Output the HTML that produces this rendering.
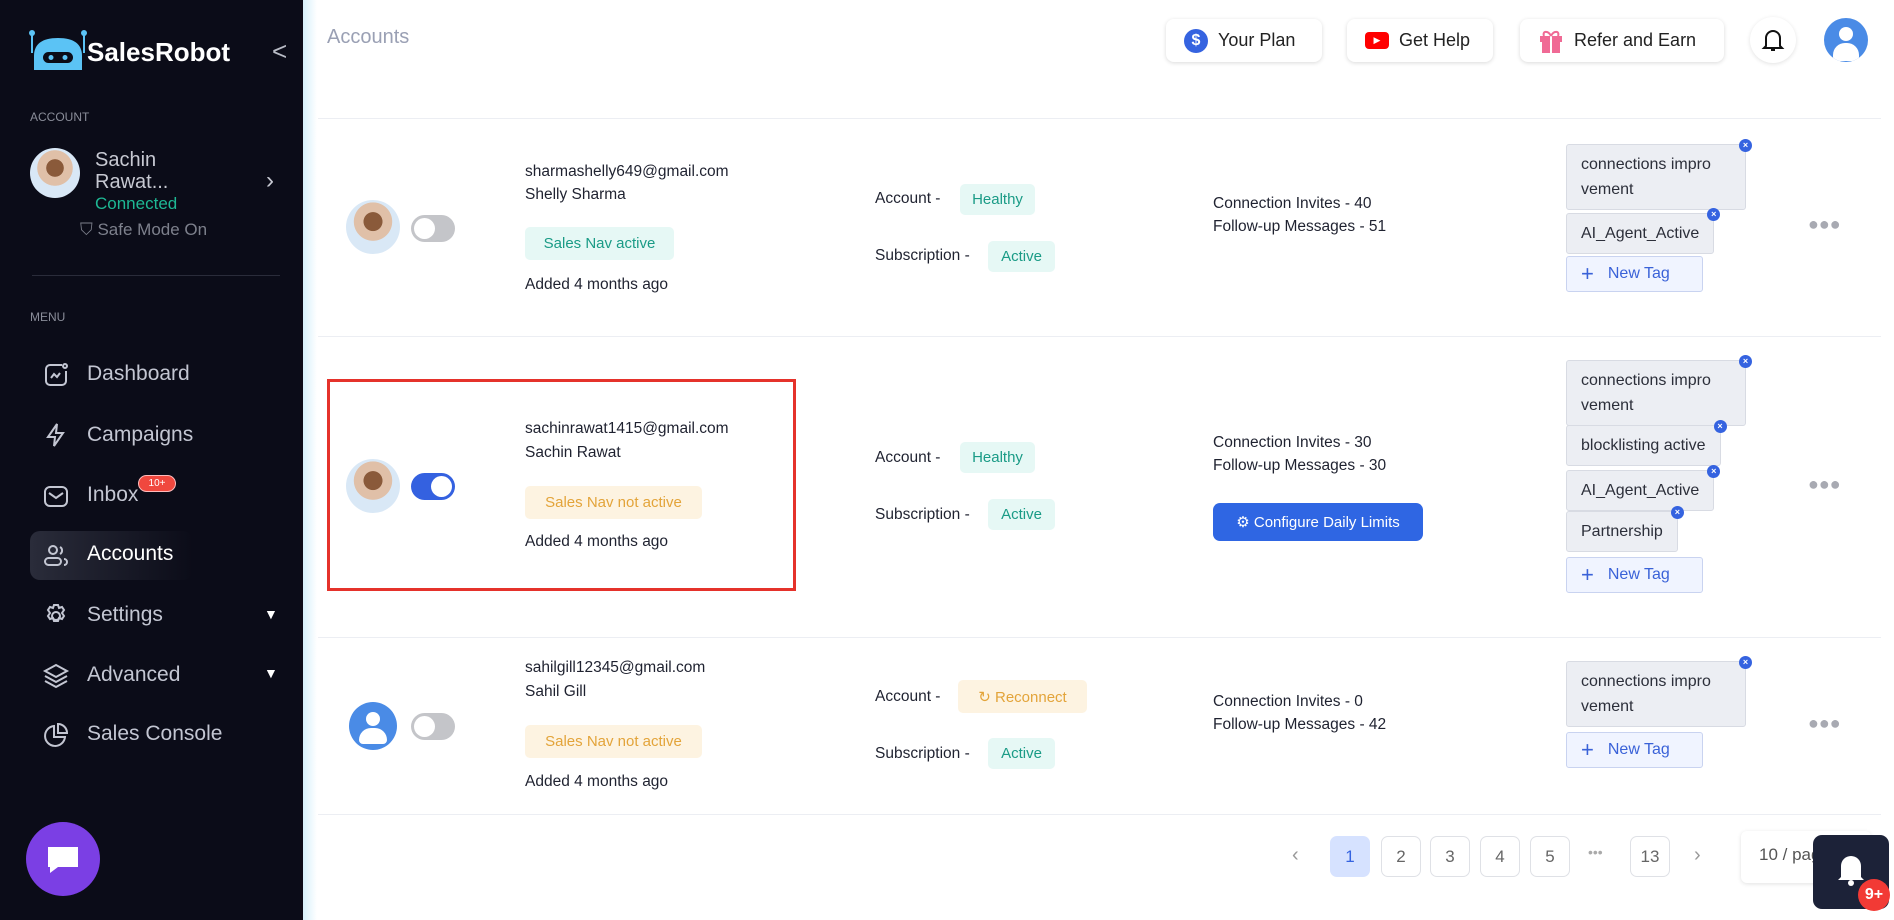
<!DOCTYPE html>
<html><head><meta charset="utf-8"><style>
*{box-sizing:border-box;margin:0;padding:0}
body{width:1894px;height:920px;position:relative;overflow:hidden;background:#fff;font-family:"Liberation Sans",sans-serif;color:#1f2230}
.a{position:absolute;white-space:nowrap}
#sb{position:absolute;left:0;top:0;width:303px;height:920px;background:#0b0c18}
.mi{position:absolute;left:87px;font-size:21px;color:#c3c6d2}
.ic{position:absolute;left:42px;width:28px;height:28px}
.btn{position:absolute;top:19px;height:43px;border-radius:8px;background:#fff;box-shadow:0 1px 4px rgba(0,0,0,.15);font-size:18px;color:#222;display:flex;align-items:center;padding-left:18px;gap:10px}
.rowline{position:absolute;left:318px;width:1563px;height:1px;background:#eceef3}
.t15{font-size:15.5px;color:#1f2230}
.bdg{position:absolute;border-radius:5px;font-size:15px;display:flex;align-items:center;justify-content:center}
.g{background:#e6f8f5;color:#1a9b86}
.y{background:#fdf3e1;color:#e3a43a}
.tag{position:absolute;left:1566px;background:#eceef3;border:1px solid #d8dbe3;border-radius:3px;font-size:16px;color:#2c2f3a;padding:7px 14px;line-height:25px;white-space:normal}
.x{position:absolute;right:-7px;top:-6px;width:13px;height:13px;border-radius:50%;background:#3563e0;color:#fff;font-size:9px;line-height:13px;text-align:center;font-weight:bold}
.nt{position:absolute;left:1566px;width:137px;height:36px;background:#f0f4ff;border:1px solid #c9d3f0;border-radius:3px;color:#3a62d8;font-size:16px;display:flex;align-items:center;padding-left:14px;gap:14px}
.tog{position:absolute;left:411px;width:44px;height:27px;border-radius:14px;background:#c4c5c9}
.tog::after{content:"";position:absolute;left:3px;top:3px;width:21px;height:21px;border-radius:50%;background:#fff}
.tog.on{background:#3461e0}.tog.on::after{left:20px}
.dots{position:absolute;left:1808px;font-size:18px;color:#a8aab2;letter-spacing:0px}
.pg{position:absolute;top:836px;width:40px;height:41px;border:1px solid #dfe1e6;border-radius:7px;font-size:17px;color:#666;display:flex;align-items:center;justify-content:center}
.av{position:absolute;border-radius:50%;background:radial-gradient(circle at 50% 40%,#8a5a3a 0 22%,#e0c0a8 23% 45%,#d9e8f6 46%)}
</style></head><body>
<div id="sb">
<svg class="a" style="left:28px;top:30px" width="60" height="42" viewBox="0 0 60 42"><circle cx="4" cy="3" r="3" fill="#5bc3f5"/><circle cx="56" cy="3" r="3" fill="#5bc3f5"/><rect x="3" y="3" width="2" height="20" fill="#5bc3f5"/><rect x="55" y="3" width="2" height="20" fill="#5bc3f5"/><path d="M6 40 V26 Q6 8 30 8 Q54 8 54 26 V40Z" fill="#5bc3f5"/><rect x="15" y="22" width="30" height="11" rx="5.5" fill="#0b0c18"/><circle cx="23" cy="27.5" r="2.5" fill="#5bc3f5"/><circle cx="37" cy="27.5" r="2.5" fill="#5bc3f5"/></svg>
<div class="a" style="left:87px;top:37px;font-size:26px;font-weight:bold;color:#fff">SalesRobot</div>
<div class="a" style="left:272px;top:36px;font-size:26px;color:#b9bcc6">&lt;</div>
<div class="a" style="left:30px;top:110px;font-size:12px;color:#8a8d99">ACCOUNT</div>
<div class="av" style="left:30px;top:148px;width:50px;height:50px"></div>
<div class="a" style="left:95px;top:149px;font-size:20px;color:#c7c9d2;line-height:22px">Sachin<br>Rawat...</div>
<div class="a" style="left:95px;top:194px;font-size:17px;color:#1eb894">Connected</div>
<div class="a" style="left:80px;top:220px;font-size:17px;color:#7d808c">⛉ Safe Mode On</div>
<div class="a" style="left:266px;top:167px;font-size:24px;color:#c7c9d2">›</div>
<div class="a" style="left:32px;top:275px;width:248px;height:1px;background:#2a2c3a"></div>
<div class="a" style="left:30px;top:310px;font-size:12px;color:#8a8d99">MENU</div>
<div class="a" style="left:30px;top:531px;width:163px;height:49px;border-radius:10px;background:linear-gradient(90deg,#2a2c3a,#0b0c18)"></div>
<svg class="ic" style="top:361px" viewBox="0 0 28 28" fill="none" stroke="#c3c6d2" stroke-width="2"><path d="M20 4H8a4 4 0 0 0-4 4v12a4 4 0 0 0 4 4h12a4 4 0 0 0 4-4V10"/><circle cx="23" cy="5" r="2"/><path d="M9 17l3-4 3 3 3-4"/></svg>
<div class="mi" style="top:362px">Dashboard</div>
<svg class="ic" style="top:421px" viewBox="0 0 28 28" fill="none" stroke="#c3c6d2" stroke-width="2"><path d="M15 3L6 16h7l-1 9 9-13h-7z"/></svg>
<div class="mi" style="top:423px">Campaigns</div>
<svg class="ic" style="top:482px" viewBox="0 0 28 28" fill="none" stroke="#c3c6d2" stroke-width="2"><rect x="3" y="5" width="22" height="19" rx="5"/><path d="M7 11l7 5 7-5"/></svg>
<div class="mi" style="top:483px">Inbox</div>
<div class="a" style="left:138px;top:475px;width:38px;height:17px;border-radius:9px;background:#f0483e;border:1px solid #fbb;color:#fff;font-size:10px;text-align:center;line-height:15px">10+</div>
<svg class="ic" style="top:541px" viewBox="0 0 28 28" fill="none" stroke="#c3c6d2" stroke-width="2"><circle cx="11" cy="9" r="4"/><rect x="3" y="17" width="16" height="7" rx="3.5"/><path d="M18 6a4 4 0 0 1 0 7M22 18a3 3 0 0 1 0 6"/></svg>
<div class="mi" style="top:542px;color:#fff">Accounts</div>
<svg class="ic" style="top:602px" viewBox="0 0 28 28" fill="none" stroke="#c3c6d2" stroke-width="2"><circle cx="14" cy="14" r="4"/><path d="M12 3h4l1 3 3-1 2 3-2 3 2 3-2 3-3-1-1 3h-4l-1-3-3 1-2-3 2-3-2-3 2-3 3 1z"/></svg>
<div class="mi" style="top:603px">Settings</div>
<div class="a" style="left:264px;top:606px;font-size:14px;color:#fff">▼</div>
<svg class="ic" style="top:662px" viewBox="0 0 28 28" fill="none" stroke="#c3c6d2" stroke-width="2"><path d="M14 3l11 6-11 6-11-6z"/><path d="M3 14l11 6 11-6M3 19l11 6 11-6"/></svg>
<div class="mi" style="top:663px">Advanced</div>
<div class="a" style="left:264px;top:665px;font-size:14px;color:#fff">▼</div>
<svg class="ic" style="top:721px" viewBox="0 0 28 28" fill="none" stroke="#c3c6d2" stroke-width="2"><path d="M12 5a10 10 0 1 0 11 11H12z"/><path d="M16 3v9h9a9 9 0 0 0-9-9z"/></svg>
<div class="mi" style="top:722px">Sales Console</div>
<div class="a" style="left:26px;top:822px;width:74px;height:74px;border-radius:50%;background:#7b3fe4"></div>
<svg class="a" style="left:46px;top:845px" width="34" height="30" viewBox="0 0 34 30"><path d="M2 2h30v20H12l-8 6v-6H2z" fill="#fff"/></svg>
</div>
<div class="a" style="left:303px;top:0;width:14px;height:920px;background:linear-gradient(90deg,#d6f0fb,#fff)"></div>
<div class="a" style="left:327px;top:26px;font-size:20px;color:#9aa0b4">Accounts</div>
<div class="btn" style="left:1166px;width:156px"><span style="width:24px;height:24px;border-radius:50%;background:#3563e0;color:#fff;font-size:16px;text-align:center;line-height:24px;font-weight:bold">$</span>Your Plan</div>
<div class="btn" style="left:1347px;width:146px"><span style="width:24px;height:17px;border-radius:4px;background:#f00;color:#fff;font-size:9px;text-align:center;line-height:17px">▶</span>Get Help</div>
<div class="btn" style="left:1520px;width:204px"><svg width="26" height="26" viewBox="0 0 26 26"><rect x="2" y="8" width="22" height="6" fill="#f06a95"/><rect x="4" y="14" width="18" height="11" fill="#f06a95"/><rect x="12" y="8" width="2" height="17" fill="#fff"/><path d="M13 8c-3-6-9-5-7 0M13 8c3-6 9-5 7 0" stroke="#f06a95" stroke-width="2" fill="none"/></svg>Refer and Earn</div>
<div class="a" style="left:1750px;top:17px;width:46px;height:46px;border-radius:50%;box-shadow:0 1px 4px rgba(0,0,0,.12)"></div>
<svg class="a" style="left:1761px;top:27px" width="24" height="26" viewBox="0 0 24 26" fill="none" stroke="#111" stroke-width="2"><path d="M5 19V11a7 7 0 0 1 14 0v8l2 2H3z"/><path d="M10 23h4"/></svg>
<div class="a" style="left:1824px;top:18px;width:44px;height:44px;border-radius:50%;background:#4a8be6;overflow:hidden"><div class="a" style="left:15px;top:9px;width:14px;height:14px;border-radius:50%;background:#fff"></div><div class="a" style="left:9px;top:25px;width:26px;height:18px;border-radius:12px 12px 4px 4px;background:#fff"></div></div>
<div class="rowline" style="top:118px"></div>
<div class="rowline" style="top:336px"></div>
<div class="rowline" style="top:637px"></div>
<div class="rowline" style="top:814px"></div>

<!-- row1 -->
<div class="av" style="left:346px;top:200px;width:54px;height:54px"></div>
<div class="tog" style="top:215px"></div>
<div class="a t15" style="left:525px;top:163px">sharmashelly649@gmail.com</div>
<div class="a t15" style="left:525px;top:186px">Shelly Sharma</div>
<div class="bdg y" style="left:525px;top:227px;width:149px;height:33px;background:#e6f8f5;color:#1a9b86">Sales Nav active</div>
<div class="a t15" style="left:525px;top:276px">Added 4 months ago</div>
<div class="a t15" style="left:875px;top:190px">Account -</div>
<div class="bdg g" style="left:960px;top:184px;width:75px;height:31px">Healthy</div>
<div class="a t15" style="left:875px;top:247px">Subscription -</div>
<div class="bdg g" style="left:988px;top:241px;width:67px;height:31px">Active</div>
<div class="a t15" style="left:1213px;top:195px">Connection Invites - 40</div>
<div class="a t15" style="left:1213px;top:218px">Follow-up Messages - 51</div>
<div class="tag" style="top:144px;width:180px">connections impro vement<span class="x">×</span></div>
<div class="tag" style="top:213px">AI_Agent_Active<span class="x">×</span></div>
<div class="nt" style="top:256px"><span style="font-size:22px">+</span>New Tag</div>
<div class="dots" style="top:214px">●●●</div>

<!-- row2 -->
<div class="a" style="left:327px;top:379px;width:469px;height:212px;border:3px solid #e5322b"></div>
<div class="av" style="left:346px;top:459px;width:54px;height:54px"></div>
<div class="tog on" style="top:473px"></div>
<div class="a t15" style="left:525px;top:420px">sachinrawat1415@gmail.com</div>
<div class="a t15" style="left:525px;top:444px">Sachin Rawat</div>
<div class="bdg y" style="left:525px;top:486px;width:177px;height:33px">Sales Nav not active</div>
<div class="a t15" style="left:525px;top:533px">Added 4 months ago</div>
<div class="a t15" style="left:875px;top:449px">Account -</div>
<div class="bdg g" style="left:960px;top:442px;width:75px;height:31px">Healthy</div>
<div class="a t15" style="left:875px;top:506px">Subscription -</div>
<div class="bdg g" style="left:988px;top:499px;width:67px;height:31px">Active</div>
<div class="a t15" style="left:1213px;top:434px">Connection Invites - 30</div>
<div class="a t15" style="left:1213px;top:457px">Follow-up Messages - 30</div>
<div class="a" style="left:1213px;top:503px;width:210px;height:38px;border-radius:7px;background:#2f66e3;color:#fff;font-size:15px;display:flex;align-items:center;justify-content:center;gap:8px">⚙ Configure Daily Limits</div>
<div class="tag" style="top:360px;width:180px">connections impro vement<span class="x">×</span></div>
<div class="tag" style="top:425px">blocklisting active<span class="x">×</span></div>
<div class="tag" style="top:470px">AI_Agent_Active<span class="x">×</span></div>
<div class="tag" style="top:511px">Partnership<span class="x">×</span></div>
<div class="nt" style="top:557px"><span style="font-size:22px">+</span>New Tag</div>
<div class="dots" style="top:474px">●●●</div>

<!-- row3 -->
<div class="a" style="left:349px;top:702px;width:48px;height:48px;border-radius:50%;background:#4a8be6;overflow:hidden"><div class="a" style="left:17px;top:10px;width:14px;height:14px;border-radius:50%;background:#fff"></div><div class="a" style="left:10px;top:26px;width:28px;height:16px;border-radius:12px 12px 4px 4px;background:#fff"></div></div>
<div class="tog" style="top:713px"></div>
<div class="a t15" style="left:525px;top:659px">sahilgill12345@gmail.com</div>
<div class="a t15" style="left:525px;top:683px">Sahil Gill</div>
<div class="bdg y" style="left:525px;top:725px;width:177px;height:33px">Sales Nav not active</div>
<div class="a t15" style="left:525px;top:773px">Added 4 months ago</div>
<div class="a t15" style="left:875px;top:688px">Account -</div>
<div class="bdg y" style="left:958px;top:680px;width:129px;height:33px;gap:12px">↻ Reconnect</div>
<div class="a t15" style="left:875px;top:745px">Subscription -</div>
<div class="bdg g" style="left:988px;top:738px;width:67px;height:31px">Active</div>
<div class="a t15" style="left:1213px;top:693px">Connection Invites - 0</div>
<div class="a t15" style="left:1213px;top:716px">Follow-up Messages - 42</div>
<div class="tag" style="top:661px;width:180px">connections impro vement<span class="x">×</span></div>
<div class="nt" style="top:732px"><span style="font-size:22px">+</span>New Tag</div>
<div class="dots" style="top:713px">●●●</div>

<!-- pagination -->
<div class="a" style="left:1292px;top:844px;font-size:20px;color:#999">‹</div>
<div class="pg" style="left:1330px;background:#d6e2ff;border-color:#d6e2ff;color:#3563e0">1</div>
<div class="pg" style="left:1381px">2</div>
<div class="pg" style="left:1430px">3</div>
<div class="pg" style="left:1480px">4</div>
<div class="pg" style="left:1530px">5</div>
<div class="a" style="left:1588px;top:844px;font-size:14px;color:#aaa">•••</div>
<div class="pg" style="left:1630px">13</div>
<div class="a" style="left:1694px;top:844px;font-size:20px;color:#999">›</div>
<div class="a" style="left:1741px;top:831px;width:130px;height:52px;border-radius:6px;box-shadow:0 1px 4px rgba(0,0,0,.12);font-size:17px;color:#555;padding:14px 0 0 18px">10 / page</div>
<div class="a" style="left:1813px;top:835px;width:76px;height:74px;border-radius:9px;background:#1c2238"></div>
<svg class="a" style="left:1836px;top:852px" width="30" height="34" viewBox="0 0 30 34"><path d="M5 25V14a10 10 0 0 1 20 0v11l3 3H2z" fill="#fff"/><circle cx="15" cy="31" r="3" fill="#fff"/></svg>
<div class="a" style="left:1858px;top:879px;width:32px;height:32px;border-radius:50%;background:#f23a35;color:#fff;font-size:16px;font-weight:bold;text-align:center;line-height:32px">9+</div>
</body></html>
